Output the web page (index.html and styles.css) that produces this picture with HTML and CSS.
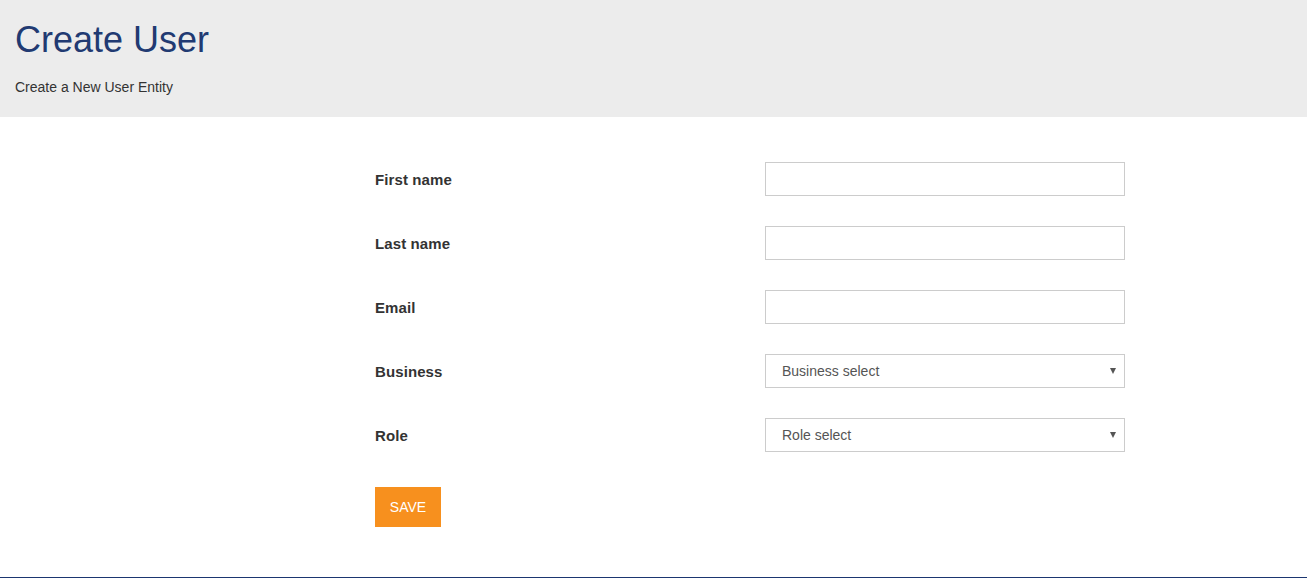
FILE: index.html
```html
<!DOCTYPE html>
<html lang="en">
<head>
<meta charset="utf-8">
<title>Create User</title>
<link rel="stylesheet" href="styles.css">
</head>
<body>
<header class="page-header">
  <h1 class="page-title">Create User</h1>
  <p class="page-subtitle">Create a New User Entity</p>
</header>
<main class="content">
  <form class="user-form">
    <div class="form-grid">
      <label class="field-label" for="first">First name</label>
      <input class="field-input" id="first" type="text">
      <label class="field-label" for="last">Last name</label>
      <input class="field-input" id="last" type="text">
      <label class="field-label" for="email">Email</label>
      <input class="field-input" id="email" type="text">
      <label class="field-label" for="business">Business</label>
      <div class="select-wrap">
        <select class="field-select" id="business"><option>Business select</option></select>
      </div>
      <label class="field-label" for="role">Role</label>
      <div class="select-wrap">
        <select class="field-select" id="role"><option>Role select</option></select>
      </div>
    </div>
    <button class="save-btn" type="button">SAVE</button>
  </form>
</main>
<footer class="page-footer"></footer>
</body>
</html>
```
FILE: styles.css
```css
* { box-sizing: border-box; }
html, body { margin: 0; padding: 0; }
body {
  font-family: "Liberation Sans", Arial, sans-serif;
  color: #333;
  background: #fff;
}
.page-header {
  background: #ececec;
  padding: 20px 15px 0;
  height: 117px;
}
.page-title {
  margin: 0 0 17px;
  font-size: 36px;
  font-weight: 400;
  line-height: 40px;
  color: #213a72;
}
.page-subtitle {
  margin: 0;
  font-size: 14px;
  line-height: 20px;
  color: #333;
}
.content {
  padding: 45px 0 50px 375px;
}
.form-grid {
  display: grid;
  grid-template-columns: 390px 360px;
  row-gap: 30px;
  align-items: center;
}
.field-label {
  font-size: 15px;
  font-weight: 700;
  color: #333;
  letter-spacing: 0.1px;
}
.field-input, .field-select {
  display: block;
  width: 360px;
  height: 34px;
  border: 1px solid #ccc;
  border-radius: 0;
  background: #fff;
  font-family: inherit;
  font-size: 14px;
  color: #555;
  padding: 0 16px;
  outline: none;
  margin: 0;
}
.field-select {
  -webkit-appearance: none;
  appearance: none;
}
.select-wrap {
  position: relative;
  width: 360px;
}
.select-wrap::after {
  content: "";
  position: absolute;
  right: 9px;
  top: 14px;
  border-left: 3.5px solid transparent;
  border-right: 3.5px solid transparent;
  border-top: 6px solid #555;
  pointer-events: none;
}
.save-btn {
  display: block;
  margin-top: 35px;
  width: 66px;
  height: 40px;
  border: 0;
  border-radius: 0;
  background: #f7901e;
  color: #fff;
  font-family: inherit;
  font-size: 14px;
  padding: 0;
}
.page-footer {
  border-top: 1px solid #1b3670;
  height: 1px;
}
```
